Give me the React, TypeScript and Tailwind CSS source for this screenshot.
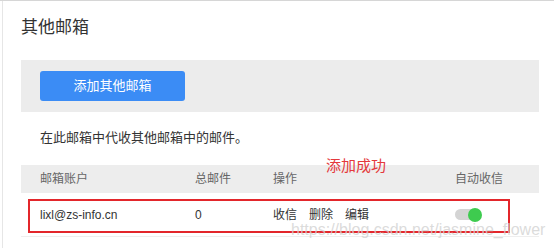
import React from "react";

export default function App() {
  return (
    <div className="relative w-[554px] h-[248px] overflow-hidden bg-white border-t border-[#d6d6d6] font-['Liberation_Sans','Noto_Sans_CJK_SC',sans-serif] text-[#333]">
      <div className="ml-[2px] h-full border-l border-[#e6e6e6] pl-[18px]">
        <div className="w-[518px]">
          <h1 className="pt-[15px] text-[17px] leading-[24px] text-[#333] font-normal">其他邮箱</h1>

          <div className="mt-[20px] h-[52px] bg-[#ececec] px-[19px] py-[11px] flex items-center">
            <button className="w-[145px] h-[30px] rounded-[3px] bg-[#3b8cf5] text-white text-[13px] leading-[30px] text-center">
              添加其他邮箱
            </button>
          </div>

          <p className="mt-[16px] pl-[19px] text-[13px] leading-[20px] text-[#333]">
            在此邮箱中代收其他邮箱中的邮件。
          </p>

          <div className="mt-[17px] h-[28px] bg-[#ededed] flex items-center text-[12px] text-[#666]">
            <div className="w-[174px] pl-[19px]">邮箱账户</div>
            <div className="w-[78px]">总邮件</div>
            <div className="w-[182px]">操作</div>
            <div>自动收信</div>
          </div>

          <div className="h-[44px] border-b border-[#eeeeee] flex items-center text-[12px] text-[#333]">
            <div className="w-[174px] pl-[19px]">lixl@zs-info.cn</div>
            <div className="w-[78px]">0</div>
            <div className="w-[182px] flex gap-[12px]">
              <span>收信</span>
              <span>删除</span>
              <span>编辑</span>
            </div>
            <div className="relative w-[27px] h-[14px] flex items-center">
              <div className="w-[22px] h-[11px] rounded-full bg-[#d4d4d4]" />
              <div className="absolute right-0 top-0 w-[14px] h-[14px] rounded-full bg-[#3ecb4f]" />
            </div>
          </div>
        </div>
      </div>

      {/* annotation overlays */}
      <div className="absolute left-[326px] top-[155px] text-[15px] leading-[20px] text-[#e4393c]">添加成功</div>
      <div className="absolute left-[28px] top-[198px] w-[482px] h-[34px] border-2 border-[#e3262b]" />
      <div className="absolute left-[291px] top-[219px] text-[16px] leading-[20px] text-[#d2d2d2]/80 font-['Liberation_Sans',sans-serif] whitespace-nowrap">
        https://blog.csdn.net/jasmine_flower
      </div>
    </div>
  );
}
